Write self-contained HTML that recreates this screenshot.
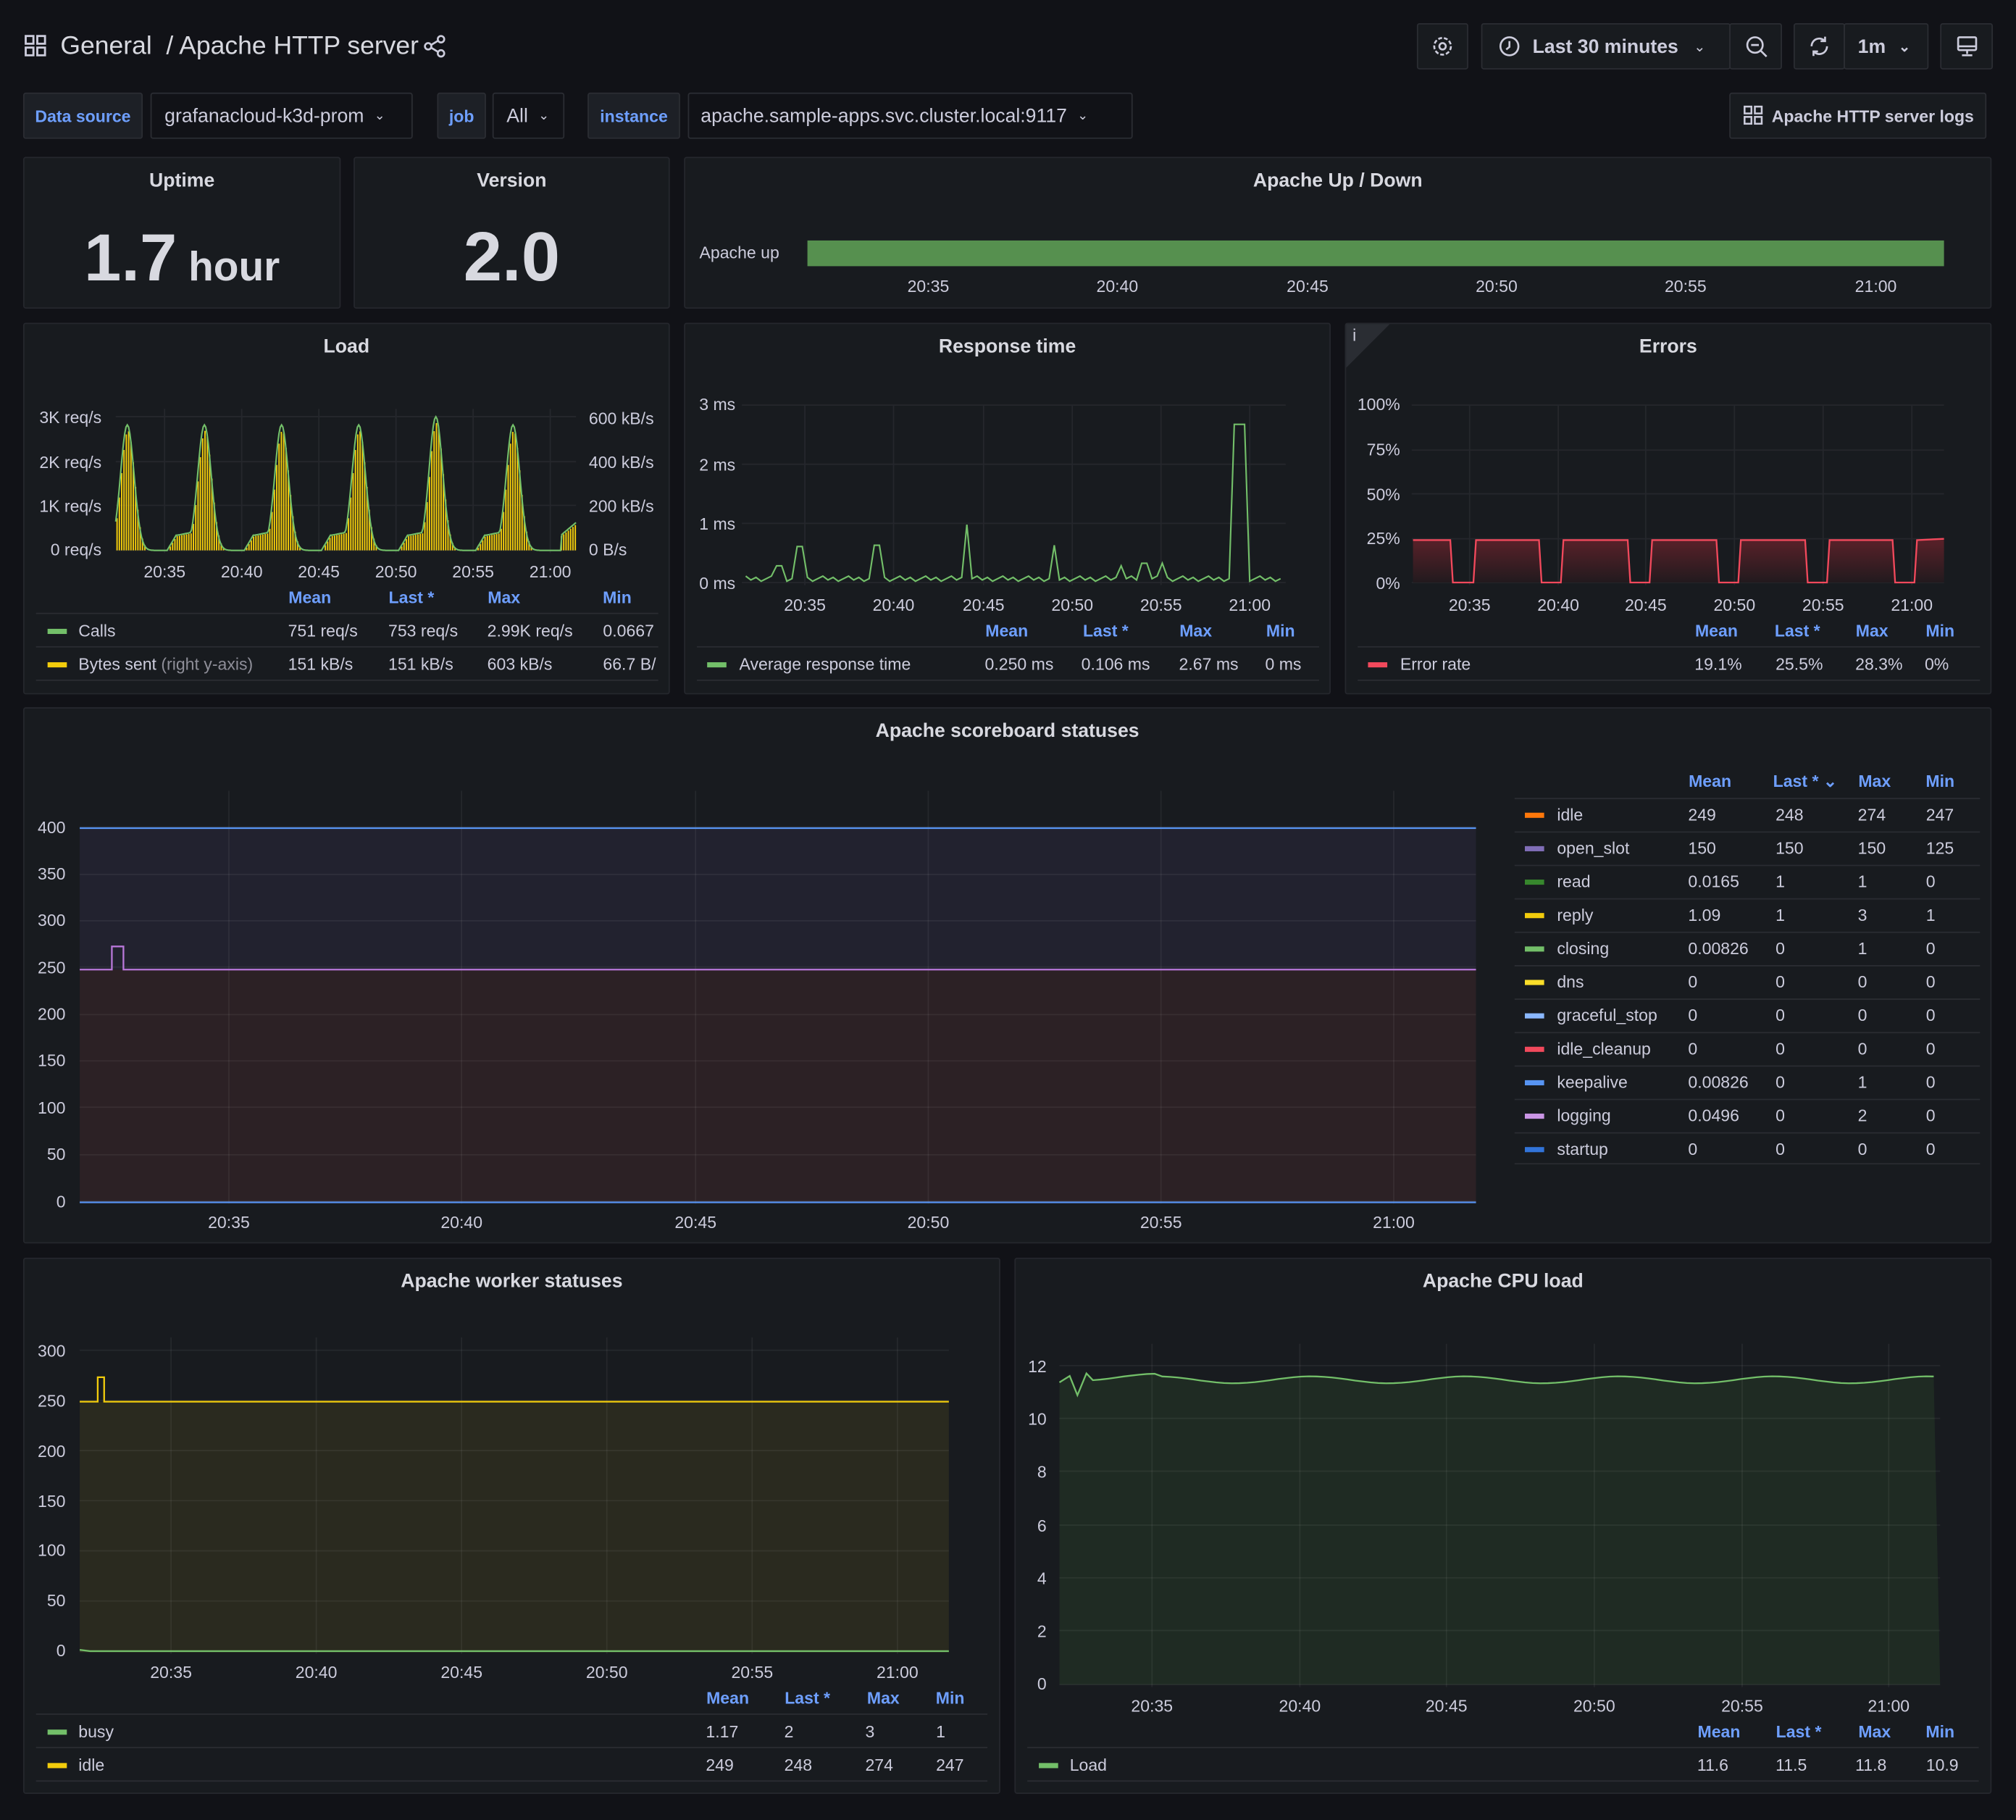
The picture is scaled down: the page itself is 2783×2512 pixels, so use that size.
<!DOCTYPE html>
<html><head><meta charset="utf-8"><style>
html,body{margin:0;padding:0;background:#111217;width:2783px;height:2512px;overflow:hidden}
#root{position:absolute;left:0;top:0;width:1568px;height:1415px;transform:scale(1.77487);transform-origin:0 0;font-family:"Liberation Sans",sans-serif;color:#ccccdc}
.p{position:absolute;background:#181b1f;border:1px solid #25272d;border-radius:2px;box-sizing:border-box}
.t{position:absolute;left:0;right:0;top:9px;text-align:center;font-size:15px;font-weight:bold;color:#d8d9e0}
.a{position:absolute;font-size:13px;color:#ccccdc;white-space:nowrap}
.btn{position:absolute;border:1px solid #2b2d33;background:#181b1f;border-radius:2px;box-sizing:border-box;font-size:15px;color:#ccccdc;display:flex;align-items:center}
.lbl{color:#6e9fff;font-weight:bold;font-size:13px;justify-content:center;background:#1d2026}
</style></head><body><div id="root">
<svg style="position:absolute;left:19px;top:27px" width="18" height="18" viewBox="0 0 18 18" fill="none" stroke="#ccccdc" stroke-width="1.6"><rect x="1" y="1" width="6" height="6"/><rect x="10" y="1" width="6" height="6"/><rect x="1" y="10" width="6" height="6"/><rect x="10" y="10" width="6" height="6"/></svg>
<div class="a" style="left:47px;top:25px;font-size:20px;color:#d8d9e0">General &nbsp;/ Apache HTTP server</div>
<svg style="position:absolute;left:329px;top:27px" width="18" height="18" viewBox="0 0 18 18" fill="none" stroke="#ccccdc" stroke-width="1.5"><circle cx="4" cy="9" r="2.5"/><circle cx="14" cy="3.5" r="2.5"/><circle cx="14" cy="14.5" r="2.5"/><path d="M6.2 8 11.8 4.6M6.2 10 11.8 13.4"/></svg>
<div class="btn" style="left:1102px;top:18px;width:40px;height:36px;justify-content:center"><svg width="18" height="18" viewBox="0 0 18 18" fill="none" stroke="#ccccdc" stroke-width="1.5"><circle cx="9" cy="9" r="2.5"/><circle cx="9" cy="9" r="6.5" stroke-dasharray="3 1.5"/></svg></div>
<div class="btn" style="left:1152px;top:18px;width:194px;height:36px;padding-left:12px"><svg width="18" height="18" viewBox="0 0 18 18" fill="none" stroke="#ccccdc" stroke-width="1.5"><circle cx="9" cy="9" r="7"/><path d="M9 5v4.5l-2.5 2"/></svg><span style="margin-left:9px;font-weight:bold">Last 30 minutes</span><span style="margin-left:12px;font-size:11px">⌄</span></div>
<div class="btn" style="left:1345px;top:18px;width:41px;height:36px;justify-content:center"><svg width="18" height="18" viewBox="0 0 18 18" fill="none" stroke="#ccccdc" stroke-width="1.5"><circle cx="8" cy="8" r="6"/><path d="M5 8h6M12.5 12.5 17 17"/></svg></div>
<div class="btn" style="left:1395px;top:18px;width:40px;height:36px;justify-content:center"><svg width="18" height="18" viewBox="0 0 18 18" fill="none" stroke="#ccccdc" stroke-width="1.5"><path d="M3 9a6 6 0 0 1 10.5-4M15 9a6 6 0 0 1-10.5 4M13.5 1.5v3.5H10M4.5 16.5V13H8"/></svg></div>
<div class="btn" style="left:1434px;top:18px;width:66px;height:36px;padding-left:10px;font-weight:bold">1m<span style="margin-left:10px;font-size:11px">⌄</span></div>
<div class="btn" style="left:1509px;top:18px;width:41px;height:36px;justify-content:center"><svg width="18" height="18" viewBox="0 0 18 18" fill="none" stroke="#ccccdc" stroke-width="1.5"><rect x="2" y="2" width="14" height="10" rx="1"/><path d="M2 9h14M9 12v3M5 16h8"/></svg></div>
<div class="btn lbl" style="left:18px;top:72px;width:93px;height:36px">Data source</div>
<div class="btn" style="left:117px;top:72px;width:204px;height:36px;padding-left:10px;font-size:15px;background:#111217">grafanacloud-k3d-prom<span style="margin-left:8px;font-size:10px">⌄</span></div>
<div class="btn lbl" style="left:340px;top:72px;width:38px;height:36px">job</div>
<div class="btn" style="left:383px;top:72px;width:56px;height:36px;padding-left:10px;background:#111217">All<span style="margin-left:8px;font-size:10px">⌄</span></div>
<div class="btn lbl" style="left:457px;top:72px;width:72px;height:36px">instance</div>
<div class="btn" style="left:535px;top:72px;width:346px;height:36px;padding-left:9px;background:#111217">apache.sample-apps.svc.cluster.local:9117<span style="margin-left:8px;font-size:10px">⌄</span></div>
<div class="btn" style="left:1345px;top:72px;width:200px;height:36px;padding-left:10px;font-size:13px;font-weight:bold"><svg width="16" height="16" viewBox="0 0 18 18" fill="none" stroke="#ccccdc" stroke-width="1.6"><rect x="1" y="1" width="6" height="6"/><rect x="10" y="1" width="6" height="6"/><rect x="1" y="10" width="6" height="6"/><rect x="10" y="10" width="6" height="6"/></svg><span style="margin-left:6px">Apache HTTP server logs</span></div>
<div class="p" style="left:18px;top:122px;width:247px;height:118px"><div class="t">Uptime</div><div class="a" style="left:0;right:0;top:48px;text-align:center;font-size:52px;font-weight:bold;color:#d8d9e0">1.7<span style="font-size:32px"> hour</span></div></div>
<div class="p" style="left:275px;top:122px;width:246px;height:118px"><div class="t">Version</div><div class="a" style="left:0;right:0;top:46px;text-align:center;font-size:54px;font-weight:bold;color:#d8d9e0">2.0</div></div>
<div class="p" style="left:532px;top:122px;width:1017px;height:118px"><div class="t">Apache Up / Down</div></div>
<div class="p" style="left:18px;top:251px;width:503px;height:289px"><div class="t">Load</div></div>
<div class="p" style="left:532px;top:251px;width:503px;height:289px"><div class="t">Response time</div></div>
<div class="p" style="left:1046px;top:251px;width:503px;height:289px"><div class="t">Errors</div></div>
<div class="p" style="left:18px;top:550px;width:1531px;height:417px"><div class="t">Apache scoreboard statuses</div></div>
<div class="p" style="left:18px;top:978px;width:760px;height:417px"><div class="t">Apache worker statuses</div></div>
<div class="p" style="left:789px;top:978px;width:760px;height:417px"><div class="t">Apache CPU load</div></div>
<svg id="g" style="position:absolute;left:0;top:0" width="1568" height="1415" font-family="Liberation Sans, sans-serif" font-size="13" fill="#ccccdc"></svg>
</div>
<script>
var g=document.getElementById('g'),s='';
function T(x,y,t,o){o=o||{};s+='<text x="'+x+'" y="'+y+'"'+(o.a?' text-anchor="'+o.a+'"':'')+(o.c?' fill="'+o.c+'"':'')+(o.w?' font-weight="bold"':'')+'>'+t+'</text>';}
function L(x1,y1,x2,y2,c,w){s+='<line x1="'+x1+'" y1="'+y1+'" x2="'+x2+'" y2="'+y2+'" stroke="'+(c||'#25272c')+'" stroke-width="'+(w||1)+'"/>';}
function R(x,y,w,h,c){s+='<rect x="'+x+'" y="'+y+'" width="'+w+'" height="'+h+'" fill="'+c+'"/>';}
function P(pts,c,fill,base,w){var d='M'+pts.map(function(p){return p[0].toFixed(1)+' '+p[1].toFixed(1)}).join('L');if(fill)s+='<path d="'+d+'L'+pts[pts.length-1][0]+' '+base+'L'+pts[0][0]+' '+base+'Z" fill="'+fill+'"/>';s+='<path d="'+d+'" fill="none" stroke="'+c+'" stroke-width="'+(w||1)+'"/>';}
R(628,187,884,20,'#56904f');
var tl=['20:35','20:40','20:45','20:50','20:55','21:00'];
T(544,201,'Apache up');[722,869,1017,1164,1311,1459].forEach(function(x,i){T(x,227,tl[i],{a:'middle'})});
[324,359,393,428].forEach(function(y){L(90,y,448,y)});
[128,188,248,308,368,428].forEach(function(x,i){L(x,318,x,430);T(x,449,tl[i],{a:'middle'})});
T(79,329,'3K req/s',{a:'end'});T(79,364,'2K req/s',{a:'end'});T(79,398,'1K req/s',{a:'end'});T(79,432,'0 req/s',{a:'end'});
T(458,330,'600 kB/s');T(458,364,'400 kB/s');T(458,398,'200 kB/s');T(458,432,'0 B/s');
var lp=[];
function lv(x){var v=0;for(var k=0;k<6;k++){var c=99+k*60;var d=x-c;v=Math.max(v,Math.exp(-d*d/55)*(k==4?0.99:0.93));if(d>-22&&d<-8)v=Math.max(v,0.11+(d+22)*0.002);if(d>-29&&d<=-22)v=Math.max(v,(d+29)*0.016);}if(x>436)v=Math.max(v,0.11+(x-436)*0.008);return v;}
for(var x=90;x<=448;x+=1)lp.push([x,428-lv(x)*105]);
for(var x=90.5;x<=448;x+=1.8){var v=lv(x);if(v>0.02)R(x,428-v*100,1.1,v*100,'#f2cc0c');}
P(lp,'#73bf69',null,0,1.2);
L(28,477,512,477,'#2a2c32');L(28,503,512,503,'#2a2c32');L(28,529,512,529,'#2a2c32');
T(241,469,'Mean',{a:'middle',c:'#6e9fff',w:1});T(320,469,'Last *',{a:'middle',c:'#6e9fff',w:1});T(392,469,'Max',{a:'middle',c:'#6e9fff',w:1});T(480,469,'Min',{a:'middle',c:'#6e9fff',w:1});
R(37,489,15,4,'#73bf69');T(61,495,'Calls');T(224,495,'751 req/s');T(302,495,'753 req/s');T(379,495,'2.99K req/s');T(469,495,'0.0667');
R(37,515,15,4,'#f2cc0c');s+='<text x="61" y="521">Bytes sent <tspan fill="#8e8e98">(right y-axis)</tspan></text>';T(224,521,'151 kB/s');T(302,521,'151 kB/s');T(379,521,'603 kB/s');T(469,521,'66.7 B/');
[315,361,407,453].forEach(function(y){L(577,y,1000,y)});
[626,695,765,834,903,972].forEach(function(x,i){L(x,315,x,455);T(x,475,tl[i],{a:'middle'})});
T(572,319,'3 ms',{a:'end'});T(572,366,'2 ms',{a:'end'});T(572,412,'1 ms',{a:'end'});T(572,458,'0 ms',{a:'end'});
var rp=[],sp={606:440,622:425,682:424,752:408,820:424,962:330,966:330,872:440,890:438,905:438};
for(var x=580;x<=998;x+=4){var y=448+((x*7)%5);rp.push([x,y]);}
rp=rp.map(function(p){var x=p[0];for(var k in sp){if(Math.abs(x-k)<3)return [x,sp[k]];}return p;});
P(rp,'#73bf69',null,0,1.2);
L(542,503,1026,503,'#2a2c32');L(542,529,1026,529,'#2a2c32');
T(783,495,'Mean',{a:'middle',c:'#6e9fff',w:1});T(860,495,'Last *',{a:'middle',c:'#6e9fff',w:1});T(930,495,'Max',{a:'middle',c:'#6e9fff',w:1});T(996,495,'Min',{a:'middle',c:'#6e9fff',w:1});
R(550,515,15,4,'#73bf69');T(575,521,'Average response time');T(766,521,'0.250 ms');T(841,521,'0.106 ms');T(917,521,'2.67 ms');T(984,521,'0 ms');
s+='<path d="M1047 252h34l-34 34z" fill="#2a2d33"/>';T(1052,265,'i',{c:'#ccccdc'});
[315,350,384,419,453].forEach(function(y){L(1098,y,1512,y)});
[1143,1212,1280,1349,1418,1487].forEach(function(x,i){L(x,315,x,455);T(x,475,tl[i],{a:'middle'})});
['100%','75%','50%','25%','0%'].forEach(function(t,i){T(1089,[319,354,389,423,458][i],t,{a:'end'})});
var ep=[[1099,420]];[[1128,1146],[1197,1214],[1266,1283],[1335,1352],[1404,1421],[1472,1489]].forEach(function(a){ep.push([a[0],420],[a[0]+2,453],[a[1],453],[a[1]+2,420]);});ep.push([1512,419]);
s+='<defs><linearGradient id="er" x1="0" y1="0" x2="0" y2="1"><stop offset="0" stop-color="#5a2129"/><stop offset="1" stop-color="#221a1e"/></linearGradient></defs>';
P(ep,'#f2495c','url(#er)',453,1.3);
L(1056,503,1540,503,'#2a2c32');L(1056,529,1540,529,'#2a2c32');
T(1335,495,'Mean',{a:'middle',c:'#6e9fff',w:1});T(1398,495,'Last *',{a:'middle',c:'#6e9fff',w:1});T(1456,495,'Max',{a:'middle',c:'#6e9fff',w:1});T(1509,495,'Min',{a:'middle',c:'#6e9fff',w:1});
R(1064,515,15,4,'#f2495c');T(1089,521,'Error rate');T(1318,521,'19.1%');T(1381,521,'25.5%');T(1443,521,'28.3%');T(1497,521,'0%');
R(62,644,1086,110,'#22222f');R(62,754,1086,181,'#2c2125');
[643,680,716,752,789,825,861,898,934].forEach(function(y){L(62,y,1148,y,'rgba(255,255,255,0.06)')});
[178,359,541,722,903,1084].forEach(function(x,i){L(x,615,x,936,'rgba(255,255,255,0.06)');T(x,955,tl[i],{a:'middle'})});
['400','350','300','250','200','150','100','50','0'].forEach(function(t,i){T(51,[648,684,720,757,793,829,866,902,939][i],t,{a:'end'})});
L(62,644,1148,644,'#5794f2',1.3);
P([[62,754],[87,754],[87,736],[96,736],[96,754],[1148,754]],'#b877d9',null,0,1.3);
L(62,935,1148,935,'#5794f2',1.3);
[['Mean',1330],['Last * ⌄',1404],['Max',1458],['Min',1509]].forEach(function(h){T(h[1],612,h[0],{a:'middle',c:'#6e9fff',w:1})});
var rows=[['idle','#ff780a','249','248','274','247'],['open_slot','#806eb7','150','150','150','125'],['read','#37872d','0.0165','1','1','0'],['reply','#f2cc0c','1.09','1','3','1'],['closing','#73bf69','0.00826','0','1','0'],['dns','#fade2a','0','0','0','0'],['graceful_stop','#8ab8ff','0','0','0','0'],['idle_cleanup','#f2495c','0','0','0','0'],['keepalive','#5794f2','0.00826','0','1','0'],['logging','#ca95e5','0.0496','0','2','0'],['startup','#3274d9','0','0','0','0']];
rows.forEach(function(r,i){var y=638+i*26;L(1178,y-17,1540,y-17,'#2a2c32');R(1186,y-6,15,4,r[1]);T(1211,y,r[0]);T(1313,y,r[2]);T(1381,y,r[3]);T(1445,y,r[4]);T(1498,y,r[5]);});
L(1178,905,1540,905,'#2a2c32');
R(62,1090,676,195,'#2a2a1f');
[1050,1089,1128,1167,1206,1245,1284].forEach(function(y){L(62,y,738,y,'rgba(255,255,255,0.06)')});
[133,246,359,472,585,698].forEach(function(x,i){L(x,1040,x,1286,'rgba(255,255,255,0.06)');T(x,1305,tl[i],{a:'middle'})});
['300','250','200','150','100','50','0'].forEach(function(t,i){T(51,[1055,1094,1133,1172,1210,1249,1288][i],t,{a:'end'})});
P([[62,1090],[76,1090],[76,1071],[81,1071],[81,1090],[738,1090]],'#f2cc0c',null,0,1.3);
P([[62,1283],[70,1284],[738,1284]],'#73bf69',null,0,1.3);
L(28,1333,768,1333,'#2a2c32');L(28,1359,768,1359,'#2a2c32');L(28,1385,768,1385,'#2a2c32');
T(566,1325,'Mean',{a:'middle',c:'#6e9fff',w:1});T(628,1325,'Last *',{a:'middle',c:'#6e9fff',w:1});T(687,1325,'Max',{a:'middle',c:'#6e9fff',w:1});T(739,1325,'Min',{a:'middle',c:'#6e9fff',w:1});
R(37,1345,15,4,'#73bf69');T(61,1351,'busy');T(549,1351,'1.17');T(610,1351,'2');T(673,1351,'3');T(728,1351,'1');
R(37,1371,15,4,'#f2cc0c');T(61,1377,'idle');T(549,1377,'249');T(610,1377,'248');T(673,1377,'274');T(728,1377,'247');
var cp=[[824,1075],[832,1070],[838,1085],[845,1068]];
for(var x=850;x<=1509;x+=6){cp.push([x,1073+3*Math.cos((x-960)/120*Math.PI*2)*0.9-(x<900?2:0)]);}
s+='<path d="M'+cp.map(function(p){return p[0]+' '+p[1].toFixed(1)}).join('L')+'L1509 1310L824 1310Z" fill="#1f2b23"/>';
[1062,1103,1144,1186,1227,1268,1310].forEach(function(y){L(824,y,1509,y,'rgba(255,255,255,0.06)')});
[896,1011,1125,1240,1355,1469].forEach(function(x,i){L(x,1045,x,1312,'rgba(255,255,255,0.06)');T(x,1331,tl[i],{a:'middle'})});
['12','10','8','6','4','2','0'].forEach(function(t,i){T(814,[1067,1108,1149,1191,1232,1273,1314][i],t,{a:'end'})});
P(cp,'#73bf69',null,0,1.3);
L(799,1359,1539,1359,'#2a2c32');L(799,1385,1539,1385,'#2a2c32');
T(1337,1351,'Mean',{a:'middle',c:'#6e9fff',w:1});T(1399,1351,'Last *',{a:'middle',c:'#6e9fff',w:1});T(1458,1351,'Max',{a:'middle',c:'#6e9fff',w:1});T(1509,1351,'Min',{a:'middle',c:'#6e9fff',w:1});
R(808,1371,15,4,'#73bf69');T(832,1377,'Load');T(1320,1377,'11.6');T(1381,1377,'11.5');T(1443,1377,'11.8');T(1498,1377,'10.9');
g.innerHTML=s;
</script>
</body></html>
